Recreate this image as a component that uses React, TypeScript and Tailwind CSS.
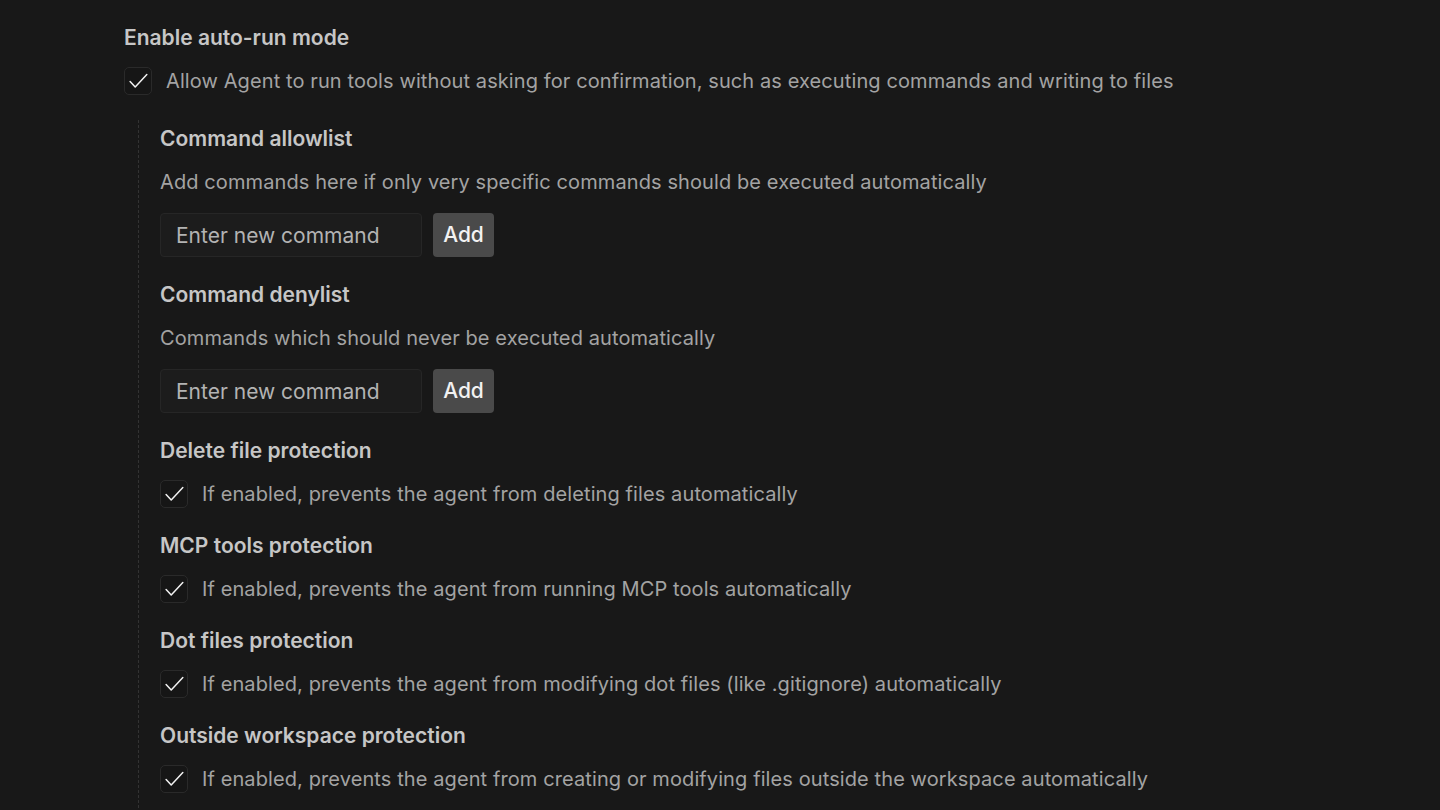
import React from 'react';

const font = { fontFamily: 'Inter, "Noto Sans", sans-serif' };

function Check() {
  return (
    <div className="flex h-[28px] w-[28px] shrink-0 items-center justify-center rounded-[5px] border border-[#2a2a2a] bg-[#161616]">
      <svg width="28" height="28" viewBox="0 0 28 28" fill="none">
        <path d="M5.5 14.5 L11 20.5 L23.5 7" stroke="#f2f2f2" strokeWidth="1.6" strokeLinecap="round" strokeLinejoin="round" />
      </svg>
    </div>
  );
}

function CheckRow({ text }: { text: string }) {
  return (
    <label className="flex h-[28px] items-center gap-[14px]">
      <Check />
      <span className="text-[20px] leading-[28px] tracking-[0.1px] text-[#a3a3a3]">{text}</span>
    </label>
  );
}

function Heading({ children }: { children: React.ReactNode }) {
  return <h3 className="text-[21px] font-semibold leading-[28px] text-[#c6c6c6]">{children}</h3>;
}

function CommandList({ title, description }: { title: string; description: string }) {
  return (
    <div className="flex flex-col">
      <Heading>{title}</Heading>
      <p className="mt-[15px] text-[20px] leading-[28px] tracking-[0.1px] text-[#a3a3a3]">{description}</p>
      <div className="mt-[17px] flex items-center gap-[11px]">
        <input
          placeholder="Enter new command"
          className="h-[44px] w-[262px] rounded-[4px] border border-[#262626] bg-[#1c1c1c] px-[15px] text-[21px] text-[#d0d0d0] outline-none placeholder:text-[#b3b3b3]"
          style={font}
        />
        <button className="h-[44px] w-[61px] rounded-[4px] bg-[#4a4a4a] text-[21px] font-medium text-[#f2f2f2]" style={font}>
          Add
        </button>
      </div>
    </div>
  );
}

const protections = [
  { title: 'Delete file protection', text: 'If enabled, prevents the agent from deleting files automatically' },
  { title: 'MCP tools protection', text: 'If enabled, prevents the agent from running MCP tools automatically' },
  { title: 'Dot files protection', text: 'If enabled, prevents the agent from modifying dot files (like .gitignore) automatically' },
  {
    title: 'Outside workspace protection',
    text: 'If enabled, prevents the agent from creating or modifying files outside the workspace automatically',
  },
];

export default function App() {
  return (
    <div className="h-[810px] w-full overflow-hidden bg-[#181818] pl-[124px] pt-[24px]" style={font}>
      <Heading>Enable auto-run mode</Heading>
      <div className="mt-[15px]">
        <CheckRow text="Allow Agent to run tools without asking for confirmation, such as executing commands and writing to files" />
      </div>

      <div className="ml-[14px] mt-[25px] flex flex-col gap-[24px] border-l border-dashed border-[#333333] pl-[21px] pt-[5px] pb-[40px]">
        <CommandList
          title="Command allowlist"
          description="Add commands here if only very specific commands should be executed automatically"
        />
        <CommandList title="Command denylist" description="Commands which should never be executed automatically" />
        {protections.map((p) => (
          <div key={p.title} className="flex flex-col gap-[15px]">
            <Heading>{p.title}</Heading>
            <CheckRow text={p.text} />
          </div>
        ))}
      </div>
    </div>
  );
}
